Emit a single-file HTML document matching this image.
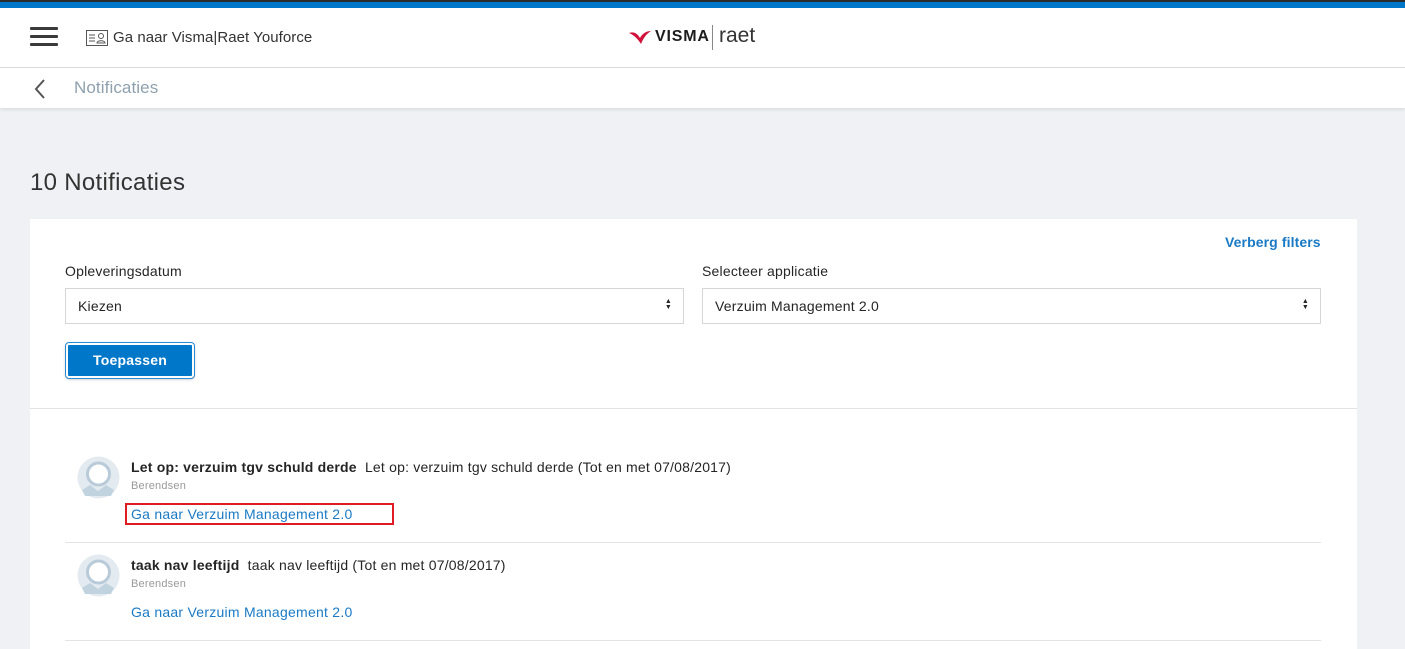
<!DOCTYPE html>
<html><head><style>
*{box-sizing:border-box;margin:0;padding:0}
body{width:1405px;height:646px;overflow:hidden;background:#f0f1f4;font-family:"Liberation Sans",sans-serif;position:relative;color:#252525}
.abs{position:absolute}
.top1{left:0;top:0;width:1405px;height:2px;background:#2b2b2b}
.top2{left:0;top:2px;width:1405px;height:6px;background:#0077c8}
.hdr{left:0;top:8px;width:1405px;height:60px;background:#fff;border-bottom:1px solid #dadada}
.bc{left:0;top:68px;width:1405px;height:40px;background:#fff;box-shadow:0 2px 3px rgba(0,0,0,.08)}
.ham{left:30px;width:28px;height:3px;background:#3a3a3a;border-radius:1px}
.card{left:30px;top:219px;width:1327px;height:430px;background:#fff}
.sel{height:36px;border:1px solid #d6d6d6;font-size:14px;padding:9px 12px;background:#fff;letter-spacing:.2px}
.lbl{font-size:14px;color:#252525;letter-spacing:.2px}
.link{color:#1a7ac5;font-size:14px;letter-spacing:.25px}
</style></head><body>
<div class="abs top1"></div><div class="abs top2"></div>
<div class="abs hdr"></div>
<div class="abs ham" style="top:27px"></div>
<div class="abs ham" style="top:35px"></div>
<div class="abs ham" style="top:43px"></div>
<svg class="abs" style="left:86px;top:30px" width="22" height="16" viewBox="0 0 22 16"><rect x="0.5" y="0.5" width="21" height="15" fill="none" stroke="#555"/><path d="M3 5h6M3 8h6M3 11h6" stroke="#555"/><circle cx="15" cy="6" r="2.5" fill="none" stroke="#555"/><path d="M11 13c0-3 8-3 8 0z" fill="none" stroke="#555"/></svg>
<div class="abs" style="left:113px;top:29px;font-size:15px;color:#333;letter-spacing:.05px">Ga naar Visma|Raet Youforce</div>
<svg class="abs" style="left:628px;top:30px" width="24" height="16" viewBox="0 0 24 16"><path d="M1 3c5-2 9 1 11 5c2-4 6-7 11-7c-5 3-8 8-10 13c-3-5-7-9-12-11z" fill="#d0123c"/></svg>
<div class="abs" style="left:655px;top:28px;font-size:16px;font-weight:900;letter-spacing:.8px;color:#1d1d1d">VISMA</div>
<div class="abs" style="left:712px;top:25px;width:1px;height:25px;background:#888"></div>
<div class="abs" style="left:719px;top:24px;font-size:21px;color:#333">raet</div>
<div class="abs bc"></div>
<svg class="abs" style="left:33px;top:79px" width="14" height="20" viewBox="0 0 14 20"><path d="M11 1L3 10l8 9" fill="none" stroke="#555" stroke-width="2"/></svg>
<div class="abs" style="left:74px;top:78px;font-size:17px;color:#8fa1ae;letter-spacing:.1px">Notificaties</div>
<div class="abs" style="left:30px;top:169px;font-size:24px;color:#333;letter-spacing:.3px">10 Notificaties</div>
<div class="abs card"></div>
<div class="abs link" style="left:1225px;top:234px;font-weight:bold;letter-spacing:.1px">Verberg filters</div>
<div class="abs lbl" style="left:65px;top:263px">Opleveringsdatum</div>
<div class="abs lbl" style="left:702px;top:263px">Selecteer applicatie</div>
<div class="abs sel" style="left:65px;top:288px;width:619px">Kiezen<span style="position:absolute;right:11px;top:10px;font-size:7px;line-height:6px">▲<br>▼</span></div>
<div class="abs sel" style="left:702px;top:288px;width:619px">Verzuim Management 2.0<span style="position:absolute;right:11px;top:10px;font-size:7px;line-height:6px">▲<br>▼</span></div>
<div class="abs" style="left:66px;top:343px;width:128px;height:35px;background:#0077c8;border:2px solid #fff;outline:1px solid #2a8ad4;border-radius:3px;box-shadow:0 1px 3px rgba(0,0,0,.3);color:#fff;font-weight:bold;font-size:14px;text-align:center;line-height:31px;letter-spacing:.2px">Toepassen</div>
<div class="abs" style="left:30px;top:408px;width:1327px;height:1px;background:#e3e3e3"></div>

<svg class="abs" style="left:77px;top:456px" width="43" height="43" viewBox="0 0 43 43"><circle cx="21.5" cy="21.5" r="21" fill="#e3eaf0"/><circle cx="21.5" cy="18" r="11" fill="#fff" stroke="#b9cbd9" stroke-width="3"/><path d="M5 34l8-5 8 6 8-6 8 5-3 6H8z" fill="#c2d3e0"/></svg>
<div class="abs" style="left:131px;top:459px;font-size:14px;letter-spacing:.2px"><b>Let op: verzuim tgv schuld derde</b>&nbsp; Let op: verzuim tgv schuld derde (Tot en met 07/08/2017)</div>
<div class="abs" style="left:131px;top:480px;font-size:11px;color:#999;letter-spacing:.2px">Berendsen</div>
<div class="abs" style="left:125px;top:503px;width:269px;height:22px;border:2px solid #e01b22"></div>
<div class="abs link" style="left:131px;top:506px">Ga naar Verzuim Management 2.0</div>
<div class="abs" style="left:65px;top:542px;width:1256px;height:1px;background:#e3e3e3"></div>

<svg class="abs" style="left:77px;top:554px" width="43" height="43" viewBox="0 0 43 43"><circle cx="21.5" cy="21.5" r="21" fill="#e3eaf0"/><circle cx="21.5" cy="18" r="11" fill="#fff" stroke="#b9cbd9" stroke-width="3"/><path d="M5 34l8-5 8 6 8-6 8 5-3 6H8z" fill="#c2d3e0"/></svg>
<div class="abs" style="left:131px;top:557px;font-size:14px;letter-spacing:.2px"><b>taak nav leeftijd</b>&nbsp; taak nav leeftijd (Tot en met 07/08/2017)</div>
<div class="abs" style="left:131px;top:578px;font-size:11px;color:#999;letter-spacing:.2px">Berendsen</div>
<div class="abs link" style="left:131px;top:604px">Ga naar Verzuim Management 2.0</div>
<div class="abs" style="left:65px;top:640px;width:1256px;height:1px;background:#e3e3e3"></div>
</body></html>
